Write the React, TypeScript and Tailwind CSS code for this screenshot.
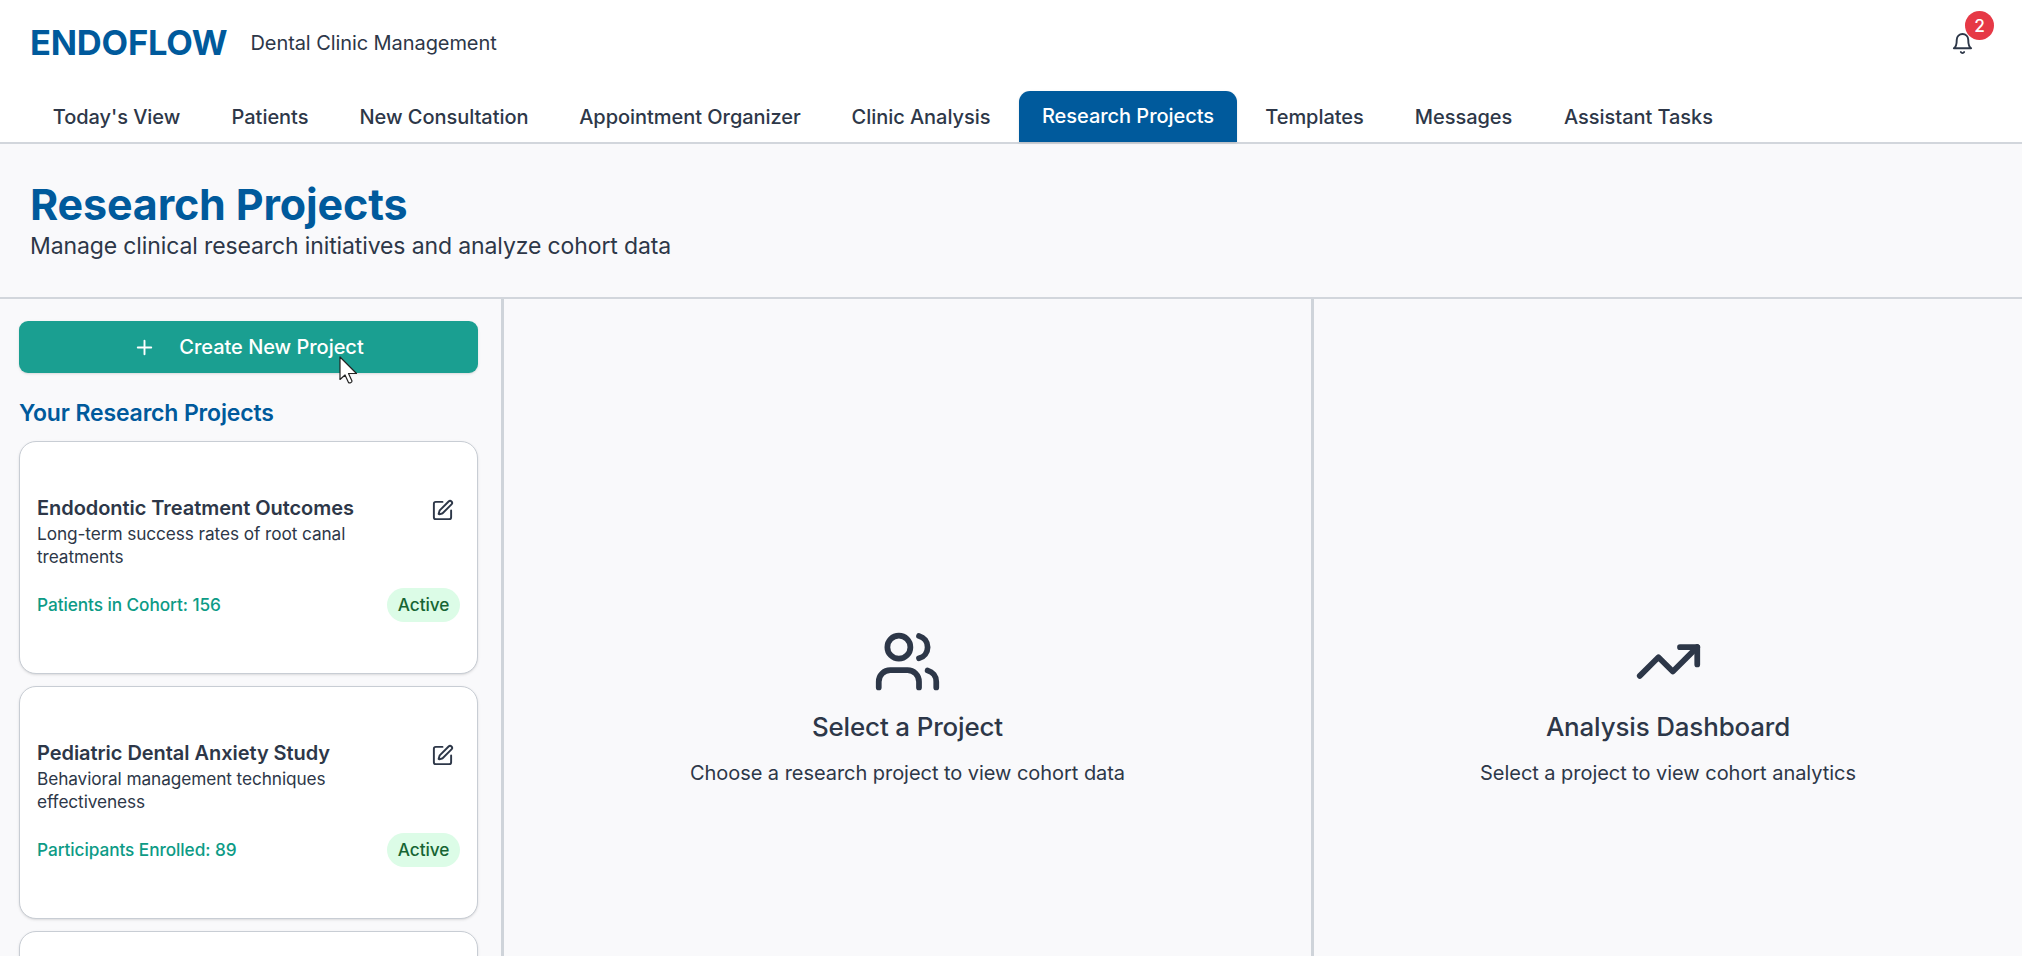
import { Plus, SquarePen, TrendingUp, Users } from "lucide-react";
import type { ReactNode } from "react";

const tabs: { label: string; width: string }[] = [
  { label: "Today's View", width: "w-[173px]" },
  { label: "Patients", width: "w-[122px]" },
  { label: "New Consultation", width: "w-[214px]" },
  { label: "Appointment Organizer", width: "w-[266px]" },
  { label: "Clinic Analysis", width: "w-[184px]" },
  { label: "Research Projects", width: "w-[218px]" },
  { label: "Templates", width: "w-[143px]" },
  { label: "Messages", width: "w-[143px]" },
  { label: "Assistant Tasks", width: "w-[195px]" },
];

const projects = [
  {
    name: "Endodontic Treatment Outcomes",
    description: "Long-term success rates of root canal treatments",
    metric: "Patients in Cohort: 156",
  },
  {
    name: "Pediatric Dental Anxiety Study",
    description: "Behavioral management techniques effectiveness",
    metric: "Participants Enrolled: 89",
  },
  { name: "", description: "", metric: "" },
];

function BellIcon() {
  return (
    <svg
      viewBox="0 0 24 24"
      className="h-[23px] w-[23px]"
      fill="none"
      stroke="currentColor"
      strokeWidth="2"
      strokeLinecap="round"
      strokeLinejoin="round"
    >
      <path d="M6 8a6 6 0 0 1 12 0c0 7 3 9 3 9H3s3-2 3-9" />
      <path d="M10.3 21a1.94 1.94 0 0 0 3.4 0" />
    </svg>
  );
}

function Header() {
  return (
    <header className="flex h-[144px] shrink-0 flex-col justify-between border-b-2 border-[#d2d6dc] bg-white">
      <div className="flex h-[86px] items-center justify-between pl-[30px] pr-[37px]">
        <div className="flex items-center gap-[23px]">
          <h1 className="text-[34.5px] font-bold leading-none tracking-[-0.2px] text-[#005a9c]">ENDOFLOW</h1>
          <span className="text-[20px] tracking-[-0.08px]">Dental Clinic Management</span>
        </div>
        <button className="relative flex h-[46px] w-[46px] items-center justify-center">
          <BellIcon />
          <span className="absolute -top-[9px] left-[26px] flex h-[29px] w-[29px] items-center justify-center rounded-full bg-[#e63946] text-[17.25px] font-medium text-white">
            2
          </span>
        </button>
      </div>
      <nav className="flex items-end gap-[6px] pl-[30px]">
        {tabs.map(({ label, width }) => (
          <button
            key={label}
            className={
              label === "Research Projects"
                ? `${width} flex h-[51px] items-center justify-center whitespace-nowrap rounded-t-[11px] bg-[#005a9c] pb-[2px] text-[20px] font-medium tracking-[-0.04px] text-white shadow-sm`
                : `${width} flex h-[51px] items-center justify-center whitespace-nowrap text-[20px] font-medium tracking-[-0.04px]`
            }
          >
            {label}
          </button>
        ))}
      </nav>
    </header>
  );
}

function ProjectCard({ name, description, metric }: (typeof projects)[number]) {
  return (
    <article className="h-[233px] shrink-0 rounded-[17px] border-[1.5px] border-[#c8cdd4] bg-white px-[17px] pt-[52px] shadow-sm">
      {name && (
        <>
          <div className="flex items-start justify-between">
            <div className="w-[330px]">
              <h3 className="whitespace-nowrap text-[20px] font-semibold leading-[28px] tracking-[-0.05px]">{name}</h3>
              <p className="text-[17.25px] leading-[23px] tracking-[-0.09px]">{description}</p>
            </div>
            <SquarePen size={23} className="mr-[6px] mt-[5px]" />
          </div>
          <div className="mt-[20px] flex items-center justify-between">
            <span className="text-[17.25px] font-medium tracking-[-0.08px] text-[#0d9b86]">{metric}</span>
            <span className="flex h-[34px] w-[73px] items-center justify-center rounded-full bg-[#dcfce7] text-[17.25px] font-medium tracking-[-0.1px] text-[#166534]">
              Active
            </span>
          </div>
        </>
      )}
    </article>
  );
}

function EmptyPanel({ icon, title, text }: { icon: ReactNode; title: string; text: string }) {
  return (
    <div className="flex h-full flex-col items-center pt-[328px]">
      {icon}
      <h3 className="mt-[14px] text-[25.9px] font-medium leading-[34px] tracking-[-0.13px]">{title}</h3>
      <p className="mt-[15px] text-[20px] leading-[29px] tracking-[-0.045px]">{text}</p>
    </div>
  );
}

export default function App() {
  return (
    <div className="flex h-[956px] w-full flex-col overflow-hidden bg-[#f9f9fb] font-['Inter',sans-serif] text-[#2d3748]">
      <Header />
      <section className="h-[155px] shrink-0 border-b-2 border-[#d2d6dc] pl-[30px] pt-[35px]">
        <h2 className="text-[43px] font-bold leading-[50px] tracking-[-0.15px] text-[#005a9c]">Research Projects</h2>
        <p className="text-[23px] leading-[34px] tracking-[-0.12px]">
          Manage clinical research initiatives and analyze cohort data
        </p>
      </section>
      <main className="flex min-h-0 flex-1">
        <aside className="flex w-[504px] shrink-0 flex-col overflow-hidden border-r-[3px] border-[#cfd4da] pl-[19px] pr-[23px] pt-[22px]">
          <button className="relative flex h-[52px] shrink-0 items-center justify-center rounded-[9px] bg-[#1a9f91] text-[20px] font-medium tracking-[-0.03px] text-white shadow-sm">
            <Plus size={23} className="mr-[23px]" />
            Create New Project
            <svg viewBox="0 0 19 28" className="absolute left-[320px] top-[35px] h-[28px] w-[19px]">
              <path
                d="M1 1v22.5l5-4.5 3.5 7.500c1 1 3.500 0 3.500-1.500l-3.500-7.500h8Z"
                fill="#fff"
                stroke="#222"
                strokeWidth="1.2"
                strokeLinejoin="round"
              />
            </svg>
          </button>
          <h2 className="mt-[23px] text-[23px] font-semibold leading-[34px] tracking-[-0.15px] text-[#005a9c]">
            Your Research Projects
          </h2>
          <div className="mt-[11px] flex flex-col gap-[12px]">
            {projects.map((p, i) => (
              <ProjectCard key={i} {...p} />
            ))}
          </div>
        </aside>
        <section className="w-[810px] shrink-0 border-r-[3px] border-[#cfd4da]">
          <EmptyPanel
            icon={<Users size={69} />}
            title="Select a Project"
            text="Choose a research project to view cohort data"
          />
        </section>
        <section className="flex-1">
          <EmptyPanel
            icon={<TrendingUp size={69} />}
            title="Analysis Dashboard"
            text="Select a project to view cohort analytics"
          />
        </section>
      </main>
    </div>
  );
}
